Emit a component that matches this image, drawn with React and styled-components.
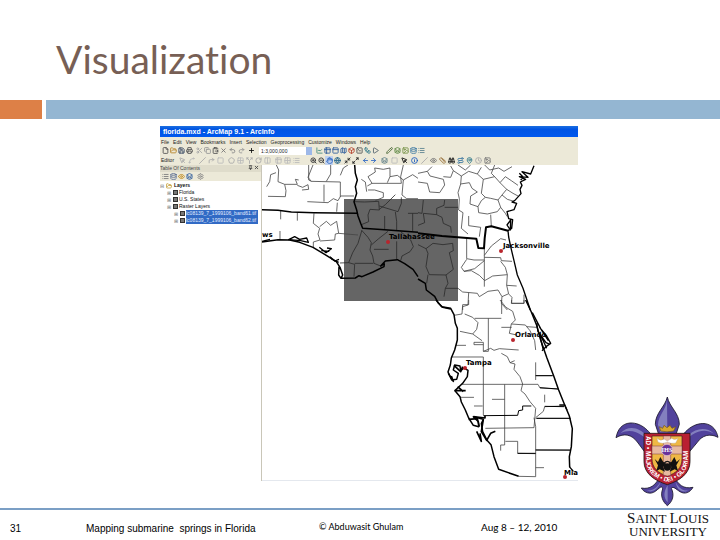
import React from "react";
import styled, { createGlobalStyle, css } from "styled-components";
import {
  File, FolderOpen, Save, Printer, Scissors, Copy, ClipboardPaste, X, Undo2,
  Redo2, Plus, ChartLine, Table2, PanelTop, Map, Box, SquareTerminal, Workflow,
  Play, Pencil, Spline, Slash, CornerUpRight, Square, Pentagon, Grid2x2, Split,
  RotateCw, Columns2, ZoomIn, ZoomOut, Hand, Globe, Minimize2, Maximize2,
  ArrowLeft, ArrowRight, Layers, MousePointer, Info, Ruler, Binoculars, MapPin,
  Route, Clock, Image, List, Database, Eye, Settings, Pin
} from "lucide-react";

const GlobalStyle = createGlobalStyle`
  * {
    box-sizing: border-box;
  }

  body {
    margin: 0;
    background: #fff;
    font-family: "Liberation Sans", Arial, sans-serif;
  }
`;

const Slide = styled.div`
  display: flex;
  flex-direction: column;
  min-height: 100vh;
`;

const Title = styled.h1`
  margin: 0;
  padding: 35px 56px 17px;
  color: #775f55;
  font: 400 39px/48px Lato, sans-serif;
  font-variant-ligatures: none;
`;

const Band = styled.div`
  display: grid;
  grid-template-columns: 42px 1fr;
  gap: 4px;
  height: 19px;

  &::before {
    content: "";
    background: #dd8047;
  }

  &::after {
    content: "";
    background: #94b6d2;
  }
`;

const Main = styled.main`
  flex: 1;
  display: grid;
  grid-template-columns: 1fr 142px;
  padding: 7px 0 0 160px;
`;

const Window = styled.section`
  align-self: start;
  overflow: hidden;
  background: #fff;
`;

const TitleBar = styled.header`
  height: 11px;
  padding-left: 3px;
  overflow: hidden;
  background: linear-gradient(#1c6fe0, #0054e3 30%, #0058ee);
  color: #fff;
  font: bold 7px/12px "Liberation Sans", sans-serif;
`;

const bar = css`
  display: flex;
  align-items: center;
  background: #ece9d8;
  color: #222;
  font: 5px "Liberation Sans", sans-serif;
  white-space: nowrap;
`;

const MenuBar = styled.nav`
  ${bar}
  height: 9px;
  padding-left: 1px;
  gap: 4px;
`;

const MenuButton = styled.button`
  padding: 0;
  border: 0;
  background: none;
  color: inherit;
  font: inherit;
`;

const Toolbar = styled.div`
  ${bar}
  height: ${(props) => props.$height || 9}px;
  padding-left: 1px;
`;

const ToolGroup = styled.div`
  display: flex;
  margin-right: ${(props) => props.$after || 2}px;
`;

const ToolButton = styled.button`
  display: flex;
  align-items: center;
  justify-content: center;
  width: ${(props) => props.$width || 8}px;
  height: 9px;
  padding: 0;
  border: 0;
  background: ${(props) => (props.$active ? "#c1d2ee" : "none")};
  color: ${(props) => props.$color || "#444"};
`;

const Scale = styled.select`
  width: 53px;
  height: 8px;
  margin: 0 3px 0 2px;
  padding: 0 2px;
  border: 0;
  appearance: none;
  background: linear-gradient(#9db8e8, #9db8e8) right / 6px 100% no-repeat #fff;
  color: #222;
  font: inherit;
`;

const Workspace = styled.div`
  display: grid;
  grid-template-columns: 102px 1fr;
`;

const Contents = styled.aside`
  border-right: 1px solid #c9c6b8;
  font: 5px "Liberation Sans", sans-serif;
  overflow: hidden;
`;

const PanelHeader = styled.div`
  display: flex;
  justify-content: space-between;
  align-items: center;
  height: 7px;
  padding: 0 2px 0 0;
  background: #dfdccb;
  color: #444;
  line-height: 7px;
`;

const Tree = styled.ul`
  margin: 0;
  padding: 1px 3px 0 0;
  list-style: none;
`;

const TreeItem = styled.li`
  display: flex;
  align-items: center;
  gap: 2px;
  height: 7px;
  padding-left: ${(props) => props.$depth * 7}px;
  white-space: nowrap;

  label {
    display: flex;
    align-items: center;
    gap: 1px;
    flex: 1;
  }

  input {
    flex: none;
    width: 5px;
    height: 5px;
    margin: 0;
    appearance: none;
    border: 1px solid #333;
    background: #777;
  }
`;

const Expander = styled.span`
  flex: none;
  width: 4px;
  color: #777;
`;

const LayerName = styled.span`
  flex: 1;
  background: ${(props) => (props.$selected ? "#316ac5" : "none")};
  color: ${(props) => (props.$selected ? "#e4edff" : "#111")};
  font-weight: ${(props) => (props.$bold ? "bold" : "normal")};
  line-height: 7px;
`;

const MapView = styled.svg`
  display: block;
  width: 100%;
  height: auto;
  border-bottom: 1px solid #e4e8ee;
`;

const Counties = styled.path`
  fill: none;
  stroke: ${(props) => props.$tone || "#444"};
  stroke-width: 2.4;
`;

const Coast = styled.path`
  fill: none;
  stroke: #000;
  stroke-width: ${(props) => props.$weight || 4};
  stroke-linejoin: round;
`;

const City = styled.text`
  fill: #000;
  font: bold 7px "DejaVu Sans", sans-serif;
`;

const Crest = styled.svg`
  align-self: end;
  justify-self: end;
  width: 104px;
  height: 111px;
  margin: 0 1px 1px 0;
`;

const Footer = styled.footer`
  display: grid;
  grid-template-columns: 76fr 233fr 162fr 142fr 97fr;
  height: 32px;
  padding-left: 10px;
  border-top: 2px solid #7b9fc5;
  color: #000;
  font-size: 10px;
  line-height: 38px;
  white-space: pre;
`;

const Author = styled.span`
  font: 9px/34px Lato, sans-serif;
`;

const EventDate = styled.span`
  font: 10px/34px Lato, sans-serif;
`;

const School = styled.div`
  display: grid;
  grid-auto-rows: 14px;
  justify-items: center;
  width: 90px;
  color: #111;
  font: 13px/16px "Liberation Serif", serif;
  text-transform: uppercase;

  b {
    font-size: 15px;
    font-weight: 400;
  }
`;

const menus = [
  "File", "Edit", "View", "Bookmarks", "Insert", "Selection",
  "Geoprocessing", "Customize", "Windows", "Help"
];

const standardTools = [
  { after: 2, items: [["New", File, "#555"], ["Open", FolderOpen, "#b8862c"], ["Save", Save, "#34435f"], ["Print", Printer, "#555"]] },
  { after: 1, items: [["Cut", Scissors, "#aaa"], ["Copy", Copy, "#999"], ["Paste", ClipboardPaste, "#555"], ["Delete", X, "#777"]] },
  { after: 1, width: 9, items: [["Undo", Undo2, "#888"], ["Redo", Redo2, "#999"]] },
  { after: 2, items: [["Add data", Plus, "#111"]] }
];

const windowTools = [
  { after: 6, items: [["Editor toolbar", ChartLine, "#4a8f80"], ["Table", Table2, "#33609e"], ["Catalog", PanelTop, "#33609e"], ["Search", Map, "#33609e"], ["Toolbox", Box, "#b5432f"], ["Python", SquareTerminal, "#555"], ["Model", Workflow, "#397e8e"], ["Results", Play, "#53626e"]] },
  { after: 1, items: [["Edit", Pencil, "#4f6b3c"], ["Theme", Layers, "#5c8741"], ["Picture", Image, "#769146"], ["Data", Database, "#417ca4"], ["Chart", List, "#5d8290"]] }
];

const editTools = [
  { after: 2, width: 9, items: [["Edit tool", MousePointer, "#aaa"], ["Trace", Spline, "#bbb"]] },
  { after: 2, width: 9, items: [["Line", Slash, "#aaa"], ["Arc", CornerUpRight, "#aaa"], ["Sketch", Square, "#bbb"]] },
  { after: 2, width: 9, items: [["Reshape", Pentagon, "#aaa"], ["Grid", Grid2x2, "#bbb"], ["Split", Split, "#aaa"], ["Rotate", RotateCw, "#aaa"], ["Attributes", Columns2, "#bbb"]] },
  { after: 8, width: 9, items: [["Properties", Table2, "#bbb"], ["Create", Grid2x2, "#bbb"], ["Options", List, "#bbb"]] }
];

const navTools = [
  { after: 2, items: [["Zoom in", ZoomIn, "#333"], ["Zoom out", ZoomOut, "#333"], ["Pan", Hand, "#316ac5", true], ["Full extent", Globe, "#27668c"]] },
  { after: 2, items: [["Fixed zoom in", Minimize2, "#222"], ["Fixed zoom out", Maximize2, "#222"]] },
  { after: 2, items: [["Back", ArrowLeft, "#316ac5"], ["Forward", ArrowRight, "#316ac5"]] },
  { after: 1, width: 10, items: [["Select", Layers, "#62818a"], ["Clear", Square, "#bbb"], ["Pointer", MousePointer, "#111"], ["Identify", Info, "#1c5bc0"]] },
  { after: 1, width: 9, items: [["Link", Slash, "#aaa"], ["Popup", Eye, "#777"], ["Measure", Ruler, "#98703a"], ["Find", Binoculars, "#222"], ["Route", Route, "#417ca4"], ["Go to", MapPin, "#397e8e"], ["Time", Clock, "#aaa"], ["Viewer", Image, "#777"]] }
];

const listTools = [
  { after: 3, items: [["Drawing order", List, "#7b7b7b"], ["Source", Database, "#5d6f95"], ["Visibility", Eye, "#c18f27"], ["Selection", Layers, "#33609e"]] },
  { after: 1, items: [["Options", Settings, "#888"]] }
];

const layers = [
  { name: "Florida", depth: 1 },
  { name: "U.S. States", depth: 1 },
  { name: "Raster Layers", depth: 1 },
  { name: "lc08139_7_1999106_band61.tif", depth: 2, selected: true },
  { name: "lc08139_7_1999106_band62.tif", depth: 2, selected: true }
];

function Tools({ groups }) {
  return groups.map((group, i) => (
    <ToolGroup key={i} $after={group.after}>
      {group.items.map(([label, Icon, color, active]) => (
        <ToolButton
          key={label}
          type="button"
          aria-label={label}
          $color={color}
          $width={group.width}
          $active={active}
        >
          <Icon size={7} strokeWidth={3} />
        </ToolButton>
      ))}
    </ToolGroup>
  ));
}

function TableOfContents() {
  return (
    <Contents>
      <PanelHeader>
        <span>Table Of Contents</span>
        <span>
          <Pin size={5} strokeWidth={4} /> <X size={5} strokeWidth={4} />
        </span>
      </PanelHeader>
      <Toolbar>
        <Tools groups={listTools} />
      </Toolbar>
      <Tree>
        <TreeItem $depth={0}>
          <Expander>⊟</Expander>
          <FolderOpen size={6} strokeWidth={3} color="#c19a2e" />
          <LayerName $bold>Layers</LayerName>
        </TreeItem>
        {layers.map((layer) => (
          <TreeItem key={layer.name} $depth={layer.depth}>
            <Expander>⊞</Expander>
            <label>
              <input type="checkbox" defaultChecked />
              <LayerName $selected={layer.selected}>{layer.name}</LayerName>
            </label>
          </TreeItem>
        ))}
      </Tree>
    </Contents>
  );
}

function FloridaMap() {
  return (
    <MapView viewBox="262 165 316 315" role="img" aria-label="Map of Florida">
      <rect x="344" y="199" width="114" height="102" fill="#656565" />

      {/* panhandle and southern Alabama */}
      <g transform="translate(258 160) scale(0.33333)">
        <Counties d="M55 15L62 30L60 65L80 73L118 73L112 58L122 60M54 38L38 44L35 65L26 80M80 73L84 92L82 110L30 109M118 76L134 82L150 74L152 88L132 90M152 15V60L160 64L247 66M160 64L150 52L165 15M218 15V42L205 64M198 74V125M148 125L210 128L226 116L240 122L248 108H288M247 66V110M238 128L236 155M68 152V178M118 156V182M66 213V240M168 160L166 190L185 205L180 222L186 240L166 246V264M185 200L205 184L218 196L236 184L242 220L232 222L230 240L186 243M242 220L300 225M247 46L256 24L270 15M310 58L322 66L326 95M328 78L342 70H430L428 50L436 15M342 70L330 50L352 36L350 24L376 28L396 24V50L388 68M330 90H350L376 98V112L352 122M396 50L418 46L436 60L464 44L480 55M436 60L432 105L446 116H480" />
        <Counties $tone="#292929" d="M290 125L320 126L362 124L364 150L336 148L330 165L332 185L310 194M364 148L382 134L412 104M364 138L420 155L430 130V112M380 168V208M412 156L416 184V210M464 160V214M450 160H480M312 210L300 250L284 278L272 308L246 309M272 308L290 313L288 350M290 310H346M312 212L330 232L340 248L336 270L344 288L348 310L368 318M340 255L362 236L390 214M348 268H392M416 244V298M428 215L458 240L466 260L456 275L432 288L428 302" />
        <Coast $weight={4.5} d="M12 149L60 151L100 156L168 158L298 160M290 15L292 40L298 60L292 80L296 100L288 125L296 150L300 168L308 190L314 205L380 209L480 217" />
        <Coast $weight={4.5} d="M12 246L60 239L95 240L125 247L165 262L200 283L235 305L246 322L254 345L249 355L242 345L243 320M249 355L292 354L303 347L312 350L345 336L378 320L379 311L368 318L382 303L418 299L440 311L465 328L480 350" />
        <Coast d="M92 239L110 230L125 238L146 234L151 247L128 242ZM184 262L204 278L220 266L207 264M190 272L214 274M216 290L230 303L243 298M220 297L242 307M12 244L36 238" />
      </g>

      {/* southern Georgia and the northeast */}
      <g transform="translate(418 160) scale(0.33333)">
        <Counties d="M0 40L28 34L42 20M28 34L36 48L76 58L80 75L65 98L35 96L28 70L0 66M76 50L98 52L106 32L98 18M106 32L130 48L128 72L120 98L124 116L122 150L135 158L130 205L150 222M130 48L152 34L178 42L190 22M120 15L142 30L158 15M178 42L196 58L190 100L202 112L218 115M128 72L154 68L162 85L178 96L158 108L156 132L180 140L190 122L202 112M230 15L220 40L230 50L196 58M230 50L246 68L266 88L252 105L240 120L218 115M246 68L262 50L280 62L300 76M200 15L215 30L242 24L258 34L282 20M266 88L285 100L300 108M252 105L268 118L288 124M240 120L248 142L238 155L208 162L182 158L180 140M248 142L262 160L268 170M218 164L220 200M152 168V197L188 202L184 230M146 236V296L168 300H199M199 292L248 293L250 302L282 304M199 286L220 258L248 236L264 240M199 260V380M146 298L130 322L138 334L170 326L199 302M138 334L160 332L184 346L200 362L224 348L268 344M248 304L262 322L268 344L266 376L296 378M266 376L272 402L282 412L280 430H318V404M120 385L134 396L178 400L184 410L210 394L240 390L252 410L270 402M252 410L250 430L268 450M152 398L150 435L134 440V450" />
        <Counties $tone="#292929" d="M0 158L12 160L16 120M16 160L56 164V145L78 136L80 120M56 164L72 172L76 190L98 200L100 218M16 160L20 188L0 196M80 142H120M0 254L24 266L45 250L75 254L104 250L106 272L94 278L106 328L84 345L34 344L24 320L30 280L24 266M84 345L90 370L82 385L78 410M30 344L26 370M82 385H120" />
        <Coast $weight={6} d="M0 220L72 228L175 236L181 264L198 265L200 235L204 202L220 199L270 212" />
        <Coast d="M348 17L338 42L312 35L330 52L304 50L323 58L307 66L312 76L306 88L309 101L290 122L282 126L296 130L288 149L267 155L272 176L284 179L281 205L270 212L272 231L278 260L288 302L298 345L315 385L337 450M278 180L267 195L277 210ZM304 40L316 52L308 60" />
        <Coast $weight={4.5} d="M0 357L22 370L25 390L50 409L60 428L74 442L98 447" />
      </g>

      {/* peninsula */}
      <g transform="translate(420 300) scale(0.33333)">
        <Counties d="M146 0V14H128L126 42L102 46M134 42L158 52L174 68L170 88L158 102L120 94M158 102L186 122M164 55H244M205 55V154H190M190 154V127H162V134H190M108 136H138M190 154L212 145L222 151L238 146L296 150M245 0V42M240 0L258 22L278 34L286 60L274 72L268 100L290 105M244 82H275M274 72L316 75L330 92L344 122L347 150M312 0V10H275V0M320 80L350 82M347 187V240M244 160L262 170L270 188L285 192L282 208L300 230L308 252L303 272L315 282L330 305L347 325M270 188L284 182M94 171H190V345M124 253H354L360 264L414 267M254 253V435H242V452M216 298H254M120 292H162M162 318H188M347 227H398M374 284V307M347 353L370 334L374 320L432 318M347 325L342 383L196 385M342 353L347 380V530L296 529M347 355H450M256 424H293V460L347 461M347 450L453 451M347 503H372" />
        <Coast $weight={3} d="M190 347L293 346L296 332L308 330V318H334M347 227H398M360 263L414 267M374 319L432 320M350 355H452M293 460H347M347 450H450" />
        <Coast $weight={4.5} d="M48 0L65 20L92 25L102 44L106 70L112 85L112 120L104 150L94 174L91 195L84 216L95 240L110 238L115 220L100 210L104 195L120 198L122 212L132 204L144 211L142 230L128 250L105 272L120 290L124 306L136 330L146 354L160 376L176 380L175 365L160 350L190 358L184 371L188 395L201 421L213 434L222 470L236 508L296 529" />
        <Coast $weight={5} d="M85 220L100 244L94 228M104 272L137 272M113 260L130 275M102 196L122 215L128 200M160 350L195 354V347M146 358L172 356L178 380M170 394L184 424L180 400M190 358L184 395L200 421L212 400L226 394" />
        <Coast $weight={4.5} d="M317 0L334 36L350 76L362 120L380 172L402 230L416 270L432 310L448 348L457 386L454 440L448 470L449 502" />
        <Coast d="M337 38L362 86L380 108L392 130L378 140L366 152M350 70L354 94L378 128L390 133M358 80L385 122M364 110L380 145M358 100L370 150M418 315L434 315L441 330M448 500L460 514" />
      </g>

      <g fill="#b9252d">
        <circle cx="388" cy="242" r="2" />
        <circle cx="501" cy="251" r="2" />
        <circle cx="513" cy="340" r="2" />
        <circle cx="465" cy="368" r="2" />
        <circle cx="565" cy="477" r="2" />
      </g>
      <City x="389" y="239">Tallahassee</City>
      <City x="503" y="248">Jacksonville</City>
      <City x="515" y="337">Orlando</City>
      <City x="466" y="365">Tampa</City>
      <City x="564" y="475">Mia</City>
      <City x="262" y="237">ws</City>
    </MapView>
  );
}

function UniversityCrest() {
  return (
    <Crest viewBox="45 33 312 333" role="img" aria-label="Saint Louis University crest">
      <g stroke="#191629" strokeWidth="2.5">
        <path fill="#51429c" d="M202 36C195 66 166 84 166 118L176 148H228L238 118C238 84 208 66 202 36Z" />
        <path fill="#51429c" d="M176 194C160 145 128 112 90 114C66 116 53 133 48 158C72 143 96 149 112 171L150 222ZM226 194C242 145 276 112 316 116C338 120 350 136 354 157C330 144 306 151 292 172L250 222Z" />
        <path fill="#51429c" d="M180 270C170 302 148 314 124 309C132 323 151 330 166 319C181 307 186 300 188 312C180 332 188 350 202 362C218 350 224 330 214 310C220 302 228 313 240 320C254 329 270 323 279 307C252 313 232 300 222 270Z" />
      </g>
      <path fill="#8380bf" d="M201 45C198 75 175 91 174 119L181 142H202ZM61 145C84 120 119 126 140 154L164 188C132 150 100 126 61 145ZM342 146C319 125 289 129 265 151L242 185C273 140 311 126 342 146ZM203 300V352C190 337 190 322 203 300ZM139 316C163 320 175 302 184 286C177 311 158 326 139 316ZM227 291C239 315 256 320 266 315C246 328 229 311 227 291Z" />
      <path fill="#b92032" stroke="#251616" strokeWidth="2.5" d="M132 145H270V230C270 265 240 287 202 299C163 287 132 265 132 230Z" />
      <path fill="#efb845" stroke="#421f20" strokeWidth="2" d="M156 153H246V221C246 248 229 265 202 273C174 265 156 248 156 221Z" />
      <path fill="#e8b9a0" stroke="#7b3946" strokeWidth="1.5" d="M190 153H212V183H246V207H212V271L202 273L190 270V207H156V183H190Z" />
      <path fill="#fff" stroke="#aaa297" strokeWidth="1" d="M171 160Q182 170 192 162L202 168L215 160Q224 167 234 160L227 174Q214 177 202 171Q187 179 174 171Z" />
      <path fill="#111" d="M164 222L174 231L181 216L190 231L198 234L190 246L195 260L179 253L169 258L174 241ZM240 222L230 231L223 216L214 231L206 234L214 246L209 260L224 253L234 258L229 241Z" />
      <circle cx="202" cy="246" r="11" fill="#111" />
      <path fill="none" stroke="#191919" strokeWidth="4" d="M192 235Q202 223 212 235" />
      <circle cx="201" cy="195" r="17" fill="#68319b" stroke="#eed2c8" strokeWidth="2" />
      <text x="201" y="202" textAnchor="middle" fill="#fff" fontFamily="Liberation Serif" fontWeight="bold" fontSize="19">IHS</text>
      <path fill="#d8a92f" stroke="#6f511f" strokeWidth="2" d="M178 125L188 130L192 121L201 128L210 121L216 130L227 125L221 138Q202 143 182 138Z" />
      <path id="motto" fill="none" d="M138 153V228C138 260 165 282 202 291C238 282 263 260 263 228V147" />
      <text fill="#fff" fontFamily="Liberation Sans" fontWeight="bold" fontSize="19">
        <textPath href="#motto">AD • MAJOREM • DEI • GLORIAM</textPath>
      </text>
    </Crest>
  );
}

function App() {
  return (
    <>
      <GlobalStyle />
      <Slide>
        <Title>Visualization</Title>
        <Band />
        <Main>
          <Window>
            <TitleBar>florida.mxd - ArcMap 9.1 - ArcInfo</TitleBar>
            <MenuBar>
              {menus.map((menu) => (
                <MenuButton key={menu} type="button">{menu}</MenuButton>
              ))}
            </MenuBar>
            <Toolbar>
              <Tools groups={standardTools} />
              <Scale aria-label="Map scale">
                <option>1:3,000,000</option>
              </Scale>
              <Tools groups={windowTools} />
            </Toolbar>
            <Toolbar $height={10}>
              <ToolGroup $after={4}>
                <MenuButton type="button">Editor</MenuButton>
              </ToolGroup>
              <Tools groups={editTools} />
              <Tools groups={navTools} />
            </Toolbar>
            <Workspace>
              <TableOfContents />
              <FloridaMap />
            </Workspace>
          </Window>
          <UniversityCrest />
        </Main>
        <Footer>
          <span>31</span>
          <span>Mapping submarine  springs in Florida</span>
          <Author>© Abduwasit Ghulam</Author>
          <EventDate>Aug 8 – 12, 2010</EventDate>
          <School>
            <span><b>S</b>aint <b>L</b>ouis</span>
            <span>University</span>
          </School>
        </Footer>
      </Slide>
    </>
  );
}

export default App;
